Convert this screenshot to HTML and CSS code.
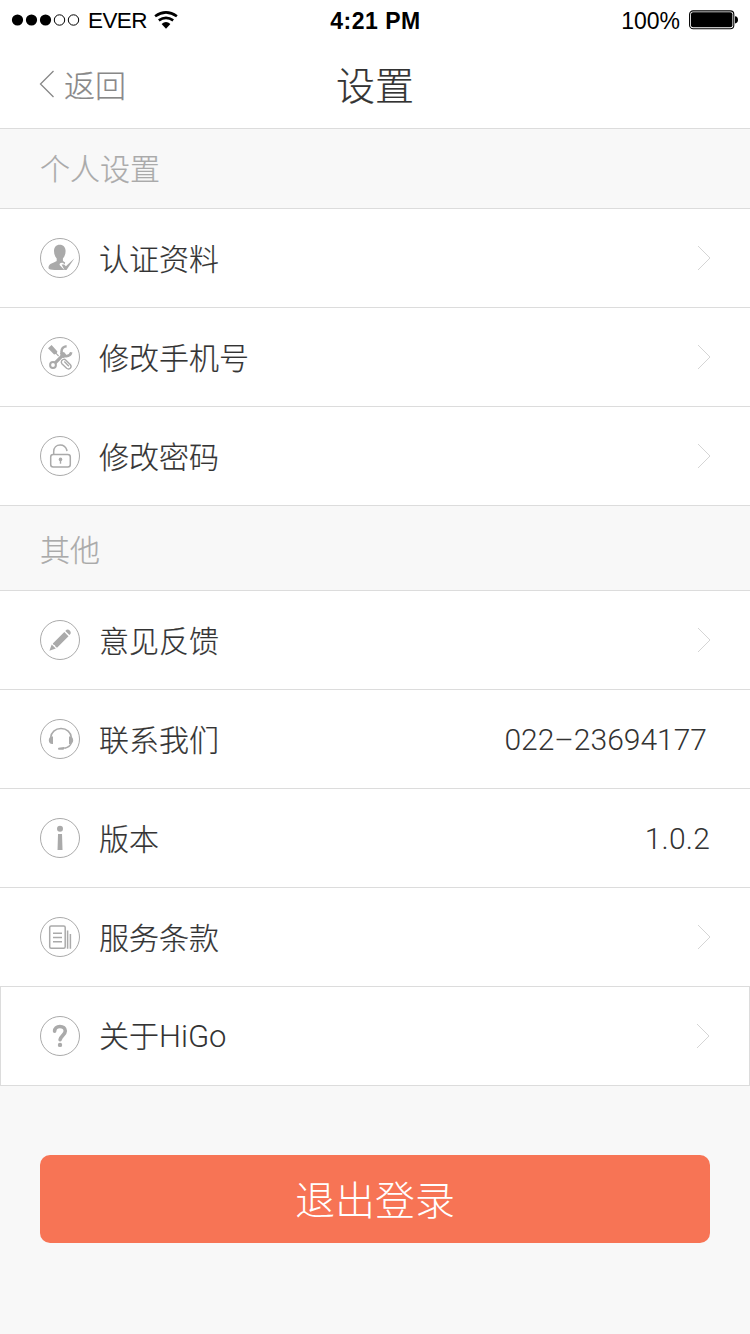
FILE: index.html
```html
<!DOCTYPE html>
<html lang="zh-CN">
<head>
<meta charset="utf-8">
<title>设置</title>
<link rel="stylesheet" href="styles.css">
</head>
<body>
<header class="header">
  <div class="status">
    <div class="status-left">
      <svg class="signal" width="68" height="12" viewBox="0 0 68 12"><circle cx="5.500" cy="6" r="5.600"/><circle cx="19.500" cy="6" r="5.600"/><circle cx="33.500" cy="6" r="5.600"/><circle class="ring" cx="47.500" cy="6" r="5.200"/><circle class="ring" cx="61.500" cy="6" r="5.200"/></svg>
      <span class="carrier">EVER</span>
      <svg class="wifi" width="24" height="18" viewBox="0 0 24 18"><path class="arc" d="M1.100 5.300Q12-2.500 22.900 5.300M4.800 9.400Q12 4.200 19.200 9.400"/><path d="M7.600 12.900Q12 9.200 16.400 12.900L12 17.800z"/></svg>
    </div>
    <span class="clock">4:21 PM</span>
    <div class="status-right">
      <span class="percent">100%</span>
      <svg class="battery" width="50" height="20" viewBox="0 0 50 20"><rect class="shell" x=".6" y=".9" width="44.200" height="17.800" rx="3.500"/><rect x="2" y="2.300" width="41.400" height="15" rx="2"/><path d="M46 6.200Q49 6.500 49 9.800T46 13.400z"/></svg>
    </div>
  </div>
  <nav class="nav">
    <a class="back"><svg width="16" height="28" viewBox="0 0 16 28"><path d="M14.500 1L1.500 14l13 13"/></svg><span class="back-text">返回</span></a>
    <h1 class="title">设置</h1>
  </nav>
</header>
<main>
  <h2 class="section">个人设置</h2>
  <ul class="list">
    <li class="row">
      <svg class="icon" viewBox="0 0 40 40"><circle class="rim" cx="20" cy="20" r="19.500"/><path class="fill" d="M19.700 6.700c-3.700 0-5.700 2.500-5.700 6.300 0 3 1 5.500 2.700 7.400v2.400c-.3 1.200-5.100 1.900-7.100 4-1.200 1.300-1.500 3.500-.5 4.300 1.900 1.200 7.900 1.100 15.300.9l-4.600-4.800c-1-1.500 1.400-3.300 3.300-2.100l1.500 1.100.6-1.600c-1.200-.7-2.300-1.100-2.300-2v-2.200c1.700-1.900 2.700-4.400 2.700-7.400 0-3.800-2.200-6.300-5.900-6.300z"/><path class="fill" d="M21.600 26.600l2.600-.2 1.700 1.900 8.600-8-8 11.700h-2z"/></svg>
      <span class="label">认证资料</span><svg class="chevron" width="14" height="26" viewBox="0 0 14 26"><path d="M1 1l12 12L1 25"/></svg>
    </li>
    <li class="row">
      <svg class="icon" viewBox="0 0 40 40"><circle class="rim" cx="20" cy="20" r="19.500"/><circle class="line bold" cx="13" cy="28" r="2.900"/><path class="line wrench" d="M15.200 25.800l7.500-7.500"/><path class="line jaw" d="M26.600 9.200c-3 .2-5.300 2.500-5.100 5.700.2 2.800 2.200 4.500 4.800 4.300 2.800-.2 4.400-1.500 5-3.900"/><path class="fill" d="M20 16l4-1 2.500 3-2.500 3-3-.5z"/><path class="fill" d="M8 11.200l3.600-3.300 5.800 6.500-.7 1.900 2.300 2.300-.8.800-2.300-2.300-1.800.5z"/><path class="line tool" d="M21.700 23.700q2-2.500 4.200-.5l4.500 4.500q1.500 2-.2 3.500t-3.600.1l-4.700-4.600q-1.200-1.500-.2-3zM24.300 24.600l4.600 4.600"/></svg>
      <span class="label">修改手机号</span><svg class="chevron" width="14" height="26" viewBox="0 0 14 26"><path d="M1 1l12 12L1 25"/></svg>
    </li>
    <li class="row">
      <svg class="icon" viewBox="0 0 40 40"><circle class="rim" cx="20" cy="20" r="19.500"/><rect class="line" x="10.700" y="18.500" width="19.600" height="12.600" rx="2.500"/><path class="line" d="M13.700 18v-2.500c0-4 2.800-6.600 6.500-6.600 3.200 0 5.600 1.700 6.600 5.100l.1 1.100"/><circle class="fill" cx="20.500" cy="23.400" r="1.800"/><path class="fill" d="M19.800 24h1.400v3.700h-1.400z"/></svg>
      <span class="label">修改密码</span><svg class="chevron" width="14" height="26" viewBox="0 0 14 26"><path d="M1 1l12 12L1 25"/></svg>
    </li>
  </ul>
  <h2 class="section other">其他</h2>
  <ul class="list">
    <li class="row">
      <svg class="icon" viewBox="0 0 40 40"><circle class="rim" cx="20" cy="20" r="19.500"/><path class="fill" d="M9.400 30.700l2.300-6.200 4.100 4.100zM12.800 23.500L24.300 12l4.200 4.200L17 27.700l-1.600-1.100-.5-1.300-1.400-.6zM25.300 11l1.300-1.300q1.600-.9 3.100.9 1.600 1.500.9 3.100l-1.200 1.300z"/></svg>
      <span class="label">意见反馈</span><svg class="chevron" width="14" height="26" viewBox="0 0 14 26"><path d="M1 1l12 12L1 25"/></svg>
    </li>
    <li class="row">
      <svg class="icon" viewBox="0 0 40 40"><circle class="rim" cx="20" cy="20" r="19.500"/><path class="line" d="M10.700 18.500c.4-5 4.500-8.900 10.300-8.900s9.900 3.900 10.300 8.900M31.300 24c-1 2.800-3.400 4.500-6.500 5.200"/><path class="fill" d="M13 17.600v7.300c-2.500.4-4.200-1-4.200-3.600s1.700-4.200 4.200-3.700zM29 17.600v7.300c2.500.4 4.200-1 4.200-3.600s-1.700-4.200-4.200-3.700zM18.500 28.700l5.500-.6 1.300 1-2 1.600h-4.800q-1.200-1 0-2z"/></svg>
      <span class="label">联系我们</span><span class="value phone">022–23694177</span>
    </li>
    <li class="row">
      <svg class="icon" viewBox="0 0 40 40"><circle class="rim" cx="20" cy="20" r="19.500"/><circle class="fill" cx="20" cy="10.700" r="3"/><path class="fill" d="M18 16h4l.5 16h-5z"/></svg>
      <span class="label">版本</span><span class="value version">1.0.2</span>
    </li>
    <li class="row">
      <svg class="icon" viewBox="0 0 40 40"><circle class="rim" cx="20" cy="20" r="19.500"/><rect class="line" x="9.700" y="8.900" width="15.500" height="22.300" rx="1.500"/><path class="line" d="M13 16.300h9M13 20.500h9M13 24.700h9M27.600 13.500v18.300M30.400 17v14.800"/></svg>
      <span class="label">服务条款</span><svg class="chevron" width="14" height="26" viewBox="0 0 14 26"><path d="M1 1l12 12L1 25"/></svg>
    </li>
    <li class="row boxed">
      <svg class="icon" viewBox="0 0 40 40"><circle class="rim" cx="20" cy="20" r="19.500"/><path class="question" d="M14.600 15.300c0-2.900 2.200-4.800 5.300-4.800s5.400 1.800 5.400 4.500c0 3.600-4.400 4.500-5.200 8.700"/><circle class="fill" cx="20" cy="28.900" r="2.200"/></svg>
      <span class="label about">关于<span class="latin">HiGo</span></span><svg class="chevron" width="14" height="26" viewBox="0 0 14 26"><path d="M1 1l12 12L1 25"/></svg>
    </li>
  </ul>
  <button class="logout">退出登录</button>
</main>
</body>
</html>
```
FILE: styles.css
```css
* { box-sizing: border-box; }
body { margin: 0; min-height: 1334px; background: #f8f8f8; color: #333; font-family: "Noto Sans CJK SC", sans-serif; font-weight: 300; }
svg { display: block; flex: none; }
h1, h2, ul { margin: 0; padding: 0; font-weight: 300; }
.header { height: 129px; background: #fff; border-bottom: 1px solid #dcdcdc; }
.status { display: grid; grid-template-columns: 1fr auto 1fr; align-items: center; height: 40px; padding: 0 11px 0 12px; color: #000; font: 400 23px/38px "Liberation Sans", Arial, sans-serif; }
.status-left, .status-right { display: flex; align-items: center; height: 40px; }
.status-right { justify-content: flex-end; }
.signal { overflow: visible; }
.carrier { margin: 0 7px 0 8px; padding-top: 2px; font-size: 22.5px; letter-spacing: -.6px; }
.clock { padding-top: 2px; font-weight: 700; font-size: 23px; letter-spacing: .5px; }
.percent { margin-right: 9px; padding-top: 2px; font-size: 23px; }
.ring { fill: none; stroke: #000; stroke-width: 1; }
.arc { fill: none; stroke: #000; stroke-width: 2.6; }
.shell { fill: none; stroke: #000; stroke-width: 1.1; }
.nav { display: grid; grid-template-columns: 1fr auto 1fr; align-items: center; height: 88px; padding: 0 39px; }
.back { display: flex; align-items: center; gap: 9px; color: #888; font-size: 31px; line-height: 40px; }
.back-text { padding-bottom: 1px; -webkit-text-stroke: .2px currentColor; }
.back path { fill: none; stroke: #888; stroke-width: 1.3; }
.title { padding-bottom: 3px; font-size: 39px; line-height: 50px; color: #333; -webkit-text-stroke: .2px currentColor; }
.section { display: flex; align-items: center; height: 79px; padding: 0 0 4px 40px; color: #aaa; font-size: 30px; line-height: 40px; -webkit-text-stroke: .2px currentColor; }
.other { height: 84px; padding-top: 0; padding-bottom: 0; }
.list { list-style: none; background: #fff; border-bottom: 1px solid #dcdcdc; }
.row { display: flex; align-items: center; height: 99px; padding: 0 39px 0 40px; border-top: 1px solid #dcdcdc; font-size: 30px; line-height: 40px; }
.icon { width: 40px; height: 40px; margin-right: 19px; }
.rim { fill: none; stroke: #aaa; stroke-width: 1; }
.fill { fill: #aaa; }
.line { fill: none; stroke: #aaa; stroke-width: 1.5; }
.bold { stroke-width: 2; }
.wrench { stroke-width: 3.2; }
.jaw { stroke-width: 2.6; }
.tool { stroke-width: 1.4; }
.question { fill: none; stroke: #aaa; stroke-width: 3.6; stroke-linecap: round; }
.label { flex: 1; padding-bottom: 3px; -webkit-text-stroke: .2px currentColor; }
.about { padding-bottom: 1px; }
.latin, .value { font-family: Roboto, "Liberation Sans", sans-serif; font-weight: 300; -webkit-text-stroke: 0; }
.latin { font-size: 31px; }
.value { padding-top: 2px; }
.chevron path { fill: none; stroke: #d5d5d5; stroke-width: 1; }
.phone { margin-right: 4px; }
.version { margin-right: 1px; letter-spacing: .2px; }
.boxed { padding: 0 39px; border-right: 1px solid #dcdcdc; border-left: 1px solid #dcdcdc; }
.logout { display: block; width: 670px; height: 88px; margin: 69px auto 0; padding: 0 0 2px; border: 0; border-radius: 10px; background: #f77455; color: #fff; font: 300 40px/86px "Noto Sans CJK SC", sans-serif; }
```
